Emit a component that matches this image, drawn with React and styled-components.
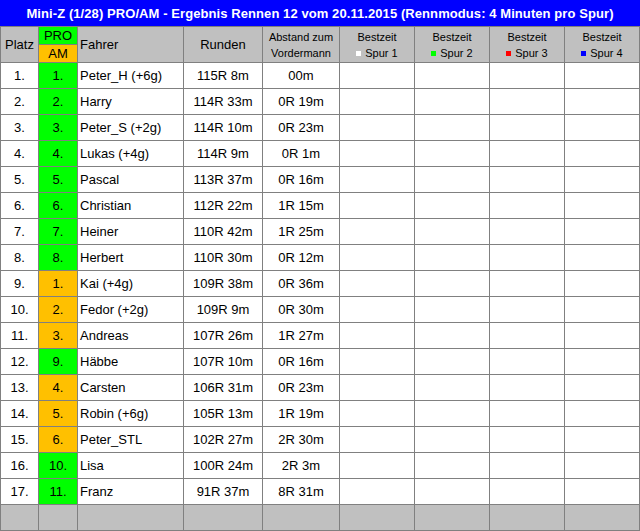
import React from 'react';
import styled, { createGlobalStyle } from 'styled-components';

const GlobalStyle = createGlobalStyle`
  html, body {
    margin: 0;
    padding: 0;
    background: #ffffff;
  }
  body {
    font-family: "Liberation Sans", Arial, sans-serif;
  }
`;

const Page = styled.div`
  width: 640px;
`;

const TitleBar = styled.div`
  height: 26px;
  background-color: #0000ff;
  color: #ffffff;
  font-weight: bold;
  font-size: 13px;
  letter-spacing: 0.08px;
  display: flex;
  align-items: center;
  justify-content: center;
`;

const Grid = styled.div`
  display: grid;
  grid-template-columns: 37px 38px 105px 78px 76px 74px 74px 74px 74px;
  grid-template-rows: 35px;
  grid-auto-rows: 25px;
  gap: 1px;
  padding: 1px;
  background-color: #808080;
`;

const HeadCell = styled.div`
  background-color: #c0c0c0;
  color: #000000;
  font-size: ${(p) => (p.$small ? '11px' : '13px')};
  line-height: ${(p) => (p.$small ? '16px' : '15px')};
  display: flex;
  flex-direction: column;
  align-items: ${(p) => (p.$left ? 'flex-start' : 'center')};
  justify-content: center;
  text-align: center;
  padding-left: ${(p) => (p.$left ? '2px' : '0')};
`;

const ClassHead = styled.div`
  display: grid;
  grid-template-rows: 17px 17px;
  gap: 1px;
  background-color: #808080;
`;

const ClassTag = styled.div`
  background-color: ${(p) => (p.$pro ? '#00ff00' : '#ffc000')};
  font-size: 13px;
  display: flex;
  align-items: center;
  justify-content: center;
`;

const Swatch = styled.span`
  display: inline-block;
  width: 5px;
  height: 5px;
  margin-right: 4px;
  background-color: ${(p) => p.$color};
  vertical-align: 1px;
`;

const Cell = styled.div`
  background-color: ${(p) => p.$bg || '#ffffff'};
  color: #000000;
  font-size: 13px;
  display: flex;
  align-items: center;
  justify-content: ${(p) => (p.$left ? 'flex-start' : 'center')};
  padding-left: ${(p) => (p.$left ? '2px' : '0')};
  white-space: nowrap;
`;

const FootCell = styled.div`
  background-color: #c0c0c0;
`;

const results = [
  { pos: 1, cls: 'pro', rank: 1, name: 'Peter_H (+6g)', laps: '115R 8m', gap: '00m' },
  { pos: 2, cls: 'pro', rank: 2, name: 'Harry', laps: '114R 33m', gap: '0R 19m' },
  { pos: 3, cls: 'pro', rank: 3, name: 'Peter_S (+2g)', laps: '114R 10m', gap: '0R 23m' },
  { pos: 4, cls: 'pro', rank: 4, name: 'Lukas (+4g)', laps: '114R 9m', gap: '0R 1m' },
  { pos: 5, cls: 'pro', rank: 5, name: 'Pascal', laps: '113R 37m', gap: '0R 16m' },
  { pos: 6, cls: 'pro', rank: 6, name: 'Christian', laps: '112R 22m', gap: '1R 15m' },
  { pos: 7, cls: 'pro', rank: 7, name: 'Heiner', laps: '110R 42m', gap: '1R 25m' },
  { pos: 8, cls: 'pro', rank: 8, name: 'Herbert', laps: '110R 30m', gap: '0R 12m' },
  { pos: 9, cls: 'am', rank: 1, name: 'Kai (+4g)', laps: '109R 38m', gap: '0R 36m' },
  { pos: 10, cls: 'am', rank: 2, name: 'Fedor (+2g)', laps: '109R 9m', gap: '0R 30m' },
  { pos: 11, cls: 'am', rank: 3, name: 'Andreas', laps: '107R 26m', gap: '1R 27m' },
  { pos: 12, cls: 'pro', rank: 9, name: 'Häbbe', laps: '107R 10m', gap: '0R 16m' },
  { pos: 13, cls: 'am', rank: 4, name: 'Carsten', laps: '106R 31m', gap: '0R 23m' },
  { pos: 14, cls: 'am', rank: 5, name: 'Robin (+6g)', laps: '105R 13m', gap: '1R 19m' },
  { pos: 15, cls: 'am', rank: 6, name: 'Peter_STL', laps: '102R 27m', gap: '2R 30m' },
  { pos: 16, cls: 'pro', rank: 10, name: 'Lisa', laps: '100R 24m', gap: '2R 3m' },
  { pos: 17, cls: 'pro', rank: 11, name: 'Franz', laps: '91R 37m', gap: '8R 31m' },
];

const lanes = [
  { label: 'Spur 1', color: '#ffffff' },
  { label: 'Spur 2', color: '#00ff00' },
  { label: 'Spur 3', color: '#ff0000' },
  { label: 'Spur 4', color: '#0000ff' },
];

const App = () => {
  return (
    <Page>
      <GlobalStyle />
      <TitleBar>
        Mini-Z (1/28) PRO/AM - Ergebnis Rennen 12 vom 20.11.2015 (Rennmodus: 4 Minuten pro Spur)
      </TitleBar>
      <Grid>
        <HeadCell>Platz</HeadCell>
        <ClassHead>
          <ClassTag $pro>PRO</ClassTag>
          <ClassTag>AM</ClassTag>
        </ClassHead>
        <HeadCell $left>Fahrer</HeadCell>
        <HeadCell>Runden</HeadCell>
        <HeadCell $small>
          <span>Abstand zum</span>
          <span>Vordermann</span>
        </HeadCell>
        {lanes.map((lane) => (
          <HeadCell $small key={lane.label}>
            <span>Bestzeit</span>
            <span>
              <Swatch $color={lane.color} />
              {lane.label}
            </span>
          </HeadCell>
        ))}

        {results.map((r) => (
          <React.Fragment key={r.pos}>
            <Cell>{r.pos}.</Cell>
            <Cell $bg={r.cls === 'pro' ? '#00ff00' : '#ffc000'}>{r.rank}.</Cell>
            <Cell $left>{r.name}</Cell>
            <Cell>{r.laps}</Cell>
            <Cell>{r.gap}</Cell>
            {lanes.map((lane) => (
              <Cell key={lane.label} />
            ))}
          </React.Fragment>
        ))}

        {Array.from({ length: 9 }).map((_, i) => (
          <FootCell key={i} />
        ))}
      </Grid>
    </Page>
  );
};

export default App;
